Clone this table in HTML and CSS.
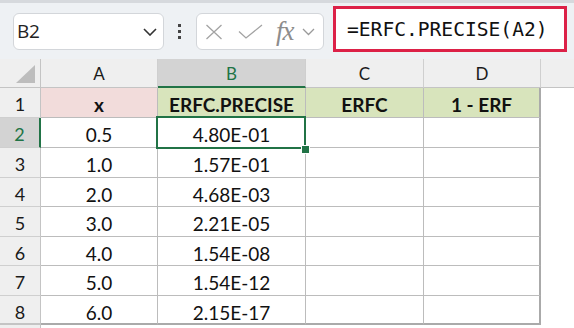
FILE: index.html
```html
<!DOCTYPE html>
<html>
<head>
<meta charset="utf-8">
<link rel="stylesheet" href="styles.css">
</head>
<body>
<div class="app">
  <div class="topstrip"></div>
  <div class="fbar">
    <div class="namebox">
      <span class="ref">B2</span>
      <svg class="chev" width="14" height="8" viewBox="0 0 14 8"><path d="M1 1 L7 7 L13 1" fill="none" stroke="#333" stroke-width="1.6"/></svg>
    </div>
    <div class="dots"><i></i><i></i><i></i></div>
    <div class="fnbox">
      <svg class="ico-x" width="18" height="16" viewBox="0 0 18 16"><path d="M1.5 1 L16.5 15 M16.5 1 L1.5 15" stroke="#a3a3a3" stroke-width="1.3" fill="none"/></svg>
      <svg class="ico-ok" width="25" height="15" viewBox="0 0 25 15"><path d="M1 7.5 L8 14 L24 1" stroke="#a3a3a3" stroke-width="1.3" fill="none"/></svg>
      <span class="fx">fx</span>
      <svg class="chev2" width="13" height="8" viewBox="0 0 13 8"><path d="M1 1 L6.5 6.5 L12 1" fill="none" stroke="#9a9a9a" stroke-width="1.3"/></svg>
    </div>
    <div class="formula">=ERFC.PRECISE(A2)</div>
  </div>
  <div class="sheet">
    <div class="corner"><span class="tri"></span></div>
    <div class="ch">A</div>
    <div class="ch sel">B</div>
    <div class="ch">C</div>
    <div class="ch">D</div>
    <div class="ch fill"></div>

    <div class="rh">1</div>
    <div class="c hd pink">x</div>
    <div class="c hd green">ERFC.PRECISE</div>
    <div class="c hd green">ERFC</div>
    <div class="c hd green last">1 - ERF</div>
    <div class="blank"></div>

    <div class="rh sel">2</div>
    <div class="c">0.5</div>
    <div class="c active">4.80E-01<span class="handle"></span></div>
    <div class="c"></div>
    <div class="c last"></div>
    <div class="blank"></div>

    <div class="rh">3</div>
    <div class="c">1.0</div>
    <div class="c">1.57E-01</div>
    <div class="c"></div>
    <div class="c last"></div>
    <div class="blank"></div>

    <div class="rh">4</div>
    <div class="c">2.0</div>
    <div class="c">4.68E-03</div>
    <div class="c"></div>
    <div class="c last"></div>
    <div class="blank"></div>

    <div class="rh">5</div>
    <div class="c">3.0</div>
    <div class="c">2.21E-05</div>
    <div class="c"></div>
    <div class="c last"></div>
    <div class="blank"></div>

    <div class="rh">6</div>
    <div class="c">4.0</div>
    <div class="c">1.54E-08</div>
    <div class="c"></div>
    <div class="c last"></div>
    <div class="blank"></div>

    <div class="rh">7</div>
    <div class="c">5.0</div>
    <div class="c">1.54E-12</div>
    <div class="c"></div>
    <div class="c last"></div>
    <div class="blank"></div>

    <div class="rh bottom">8</div>
    <div class="c bottom">6.0</div>
    <div class="c bottom">2.15E-17</div>
    <div class="c bottom"></div>
    <div class="c bottom last"></div>
    <div class="blank"></div>

    <div class="rh tail"></div>
    <div class="blank span5"></div>
  </div>
</div>
</body>
</html>
```

FILE: styles.css
```css
* { box-sizing: border-box; }
html, body { margin: 0; padding: 0; }
body { width: 574px; height: 328px; overflow: hidden; background: #ffffff; }

.app { width: 574px; height: 328px; display: flex; flex-direction: column; }

.topstrip {
  height: 3px;
  background: #d6d9dd;
  box-shadow: 0 1px 2px rgba(0,0,0,0.12);
}

.fbar {
  height: 57px;
  background: #eef1f4;
  display: flex;
  align-items: flex-start;
  padding-left: 13px;
}

.namebox {
  margin-top: 10px;
  width: 151px;
  height: 37px;
  background: #ffffff;
  border: 1px solid #d3d6da;
  border-radius: 6px;
  display: flex;
  align-items: center;
  justify-content: space-between;
  padding: 0 6px 1px 3px;
}
.ref {
  font-family: "Open Sans", "Liberation Sans", sans-serif;
  font-size: 19px;
  color: #222;
  letter-spacing: -0.3px;
}
.chev { display: block; margin-top: 2px; }

.dots {
  margin: 21px 0 0 14px;
  width: 3px;
  display: flex;
  flex-direction: column;
  gap: 3px;
}
.dots i {
  display: block;
  width: 3px;
  height: 3px;
  background: #444;
}

.fnbox {
  margin: 10px 0 0 15px;
  width: 128px;
  height: 37px;
  background: #ffffff;
  border: 1px solid #d3d6da;
  border-radius: 6px;
  display: flex;
  align-items: center;
  padding: 0 0 0 8px;
}
.ico-x { display: block; margin-top: 1px; }
.ico-ok { display: block; margin-left: 15px; }
.fx {
  margin-left: 13px;
  font-family: "Liberation Serif", "DejaVu Serif", serif;
  font-style: italic;
  font-size: 27px;
  color: #8d8d8d;
  line-height: 1;
  letter-spacing: -1px;
}
.chev2 { display: block; margin-left: 8px; margin-top: 1px; }

.formula {
  margin: 3px 0 0 9px;
  width: 234px;
  height: 46px;
  background: #ffffff;
  border: 3px solid #dc2148;
  padding: 6px 0 0 11px;
  font-family: "DejaVu Sans Mono", "Liberation Mono", monospace;
  font-size: 19.6px;
  line-height: 30px;
  color: #111;
  white-space: nowrap;
}

.sheet {
  flex: 1;
  display: grid;
  grid-template-columns: 41px 117px 148px 118px 117px 1fr;
  grid-template-rows: 29px 30px 30px 30px 29px 30px 29px 30px 29px 1fr;
  font-family: Lato, "Liberation Sans", sans-serif;
  color: #111;
}

.corner {
  background: #efefef;
  border-right: 1px solid #c4c4c4;
  border-bottom: 1px solid #c4c4c4;
  position: relative;
}
.tri {
  position: absolute;
  right: 5px;
  bottom: 4px;
  width: 0;
  height: 0;
  border-left: 19px solid transparent;
  border-bottom: 18px solid #bdbdbd;
}

.ch {
  background: #efefef;
  border-right: 1px solid #cfcfcf;
  border-bottom: 1px solid #c4c4c4;
  text-align: center;
  font-size: 17px;
  line-height: 26px;
  padding-top: 2px;
  color: #1a1a1a;
}
.ch.sel {
  background: #d3d3d3;
  color: #217346;
  border-bottom: 2px solid #217346;
}
.ch.fill { border-right: none; }

.rh {
  background: #efefef;
  border-right: 1px solid #c4c4c4;
  border-bottom: 1px solid #cfcfcf;
  text-align: center;
  font-size: 18px;
  line-height: 26px;
  padding-top: 3px;
  color: #1a1a1a;
}
.rh.sel {
  background: #d3d3d3;
  color: #217346;
  border-right: 2px solid #217346;
}
.rh.bottom { border-bottom: 2px solid #c4c4c4; }
.rh.tail { border-bottom: none; }

.c {
  background: #ffffff;
  border-right: 1px solid #bcbcbc;
  border-bottom: 1px solid #bcbcbc;
  text-align: center;
  font-size: 19px;
  line-height: 26px;
  padding-top: 4px;
  white-space: nowrap;
}
.c.hd { font-weight: 700; }
.c.pink { background: #f2dcdb; }
.c.green { background: #d8e4bc; }
.c.last { border-right: 2px solid #aaaaaa; }
.c.bottom { border-bottom: 2px solid #aaaaaa; }

.c.active { position: relative; z-index: 2; overflow: visible; }
.c.active::after {
  content: "";
  position: absolute;
  top: -2px;
  left: -2px;
  right: -1px;
  bottom: -2px;
  border: 2px solid #217346;
  pointer-events: none;
  z-index: 1;
}
.handle {
  position: absolute;
  right: -5px;
  bottom: -7px;
  width: 9px;
  height: 9px;
  background: #217346;
  border: 1px solid #ffffff;
  z-index: 5;
}

.blank { background: #ffffff; }
.span5 { grid-column: 2 / 7; }
```
